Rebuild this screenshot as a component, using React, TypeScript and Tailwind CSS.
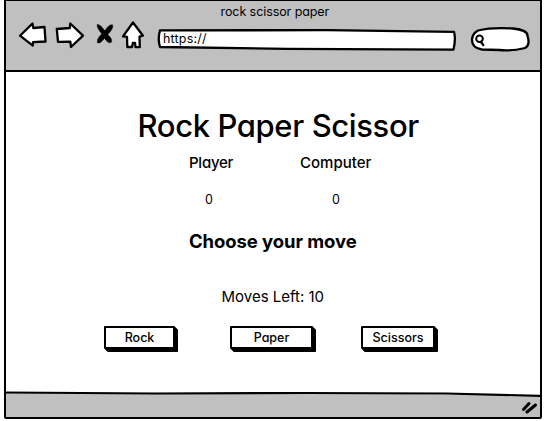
import React from 'react';

const ink = { stroke: '#000', strokeLinecap: 'round', strokeLinejoin: 'round' } as const;

function NavIcons() {
  return (
    <svg width="145" height="70" viewBox="0 0 145 70" className="block shrink-0" fill="#fff" strokeWidth="2.3" {...ink}>
      <path d="M14 34.7 L26.5 22.5 L27.3 27 L38.5 26 L39.5 40.5 L27 41.2 L26.8 44.7 Z" />
      <path d="M50.8 28 L63.8 27 L64.3 22.5 L77 34.7 L65 46 L64.3 40.7 L52 40.8 Z" />
      <path d="M117 35.3 L127 21.5 L137 34.7 L133.5 35.7 L133.8 46.2 L129.5 46 L129 42 L126.8 42 L126 46 L121.3 46 L121 35.9 Z" />
      <path d="M91.3 23.8 Q93.5 22.5 98.8 29.8 Q103 23 106.5 23.8 Q108 27 101.8 33.6 Q107 38.5 105.3 41.3 Q102.5 43.3 98.5 37.2 Q94.5 43 91.5 41.8 Q90.5 38 95.8 32.8 Q90.3 26.5 91.3 23.8 Z" fill="#000" strokeWidth="0.5" />
    </svg>
  );
}

function AddressBar() {
  return (
    <div className="relative ml-[6px] mt-[28px] h-[22px] w-[300px]">
      <svg className="absolute inset-0" width="300" height="22" fill="#fff" strokeWidth="2.3" {...ink}>
        <path d="M3 1.3 L170 1.2 L297 2.8 Q299 10 296.5 20.6 L130 19.9 L3 18 Q0.5 10 3 1.3 Z" />
      </svg>
      <span className="relative block pl-[6px] pt-[1px] text-[12.5px] font-normal leading-[18px] tracking-[0.2px]">https://</span>
    </div>
  );
}

function SearchField() {
  return (
    <svg className="ml-[13px] mt-[25px] block shrink-0" width="62" height="28" fill="#fff" strokeWidth="2.3" {...ink}>
      <path d="M8 4.5 Q22 1 43 2.5 Q58 4 57.5 10 Q60.5 19 55 22 Q42 25.5 29 24 L12 23.5 Q2 22 2 14 Q2 8 8 4.5 Z" />
      <circle cx="9.5" cy="12.8" r="3.3" strokeWidth="2" />
      <path d="M11 16 L13.3 19" />
    </svg>
  );
}

function MoveButton({ label, className }: { label: string; className: string }) {
  return (
    <button
      className={`h-[23px] rounded-[1px] border-2 border-black bg-white text-[12.5px] font-medium leading-[20px] shadow-[1px_1px_0_#000,2px_2px_0_#000,3px_3px_0_#000] ${className}`}
    >
      {label}
    </button>
  );
}

export default function App() {
  return (
    <div className="h-[421px] w-[548px] overflow-hidden bg-white pl-[4px] font-[Inter,'Noto_Sans',sans-serif] font-medium text-black [font-feature-settings:'cv11']">
      <main className="flex h-[419px] w-[538px] flex-col rounded-b-[2px] border-x-2 border-b-2 border-t border-black">
        <header className="relative flex h-[71px] shrink-0 border-b-2 border-black bg-[#c0c0c0]">
          <NavIcons />
          <AddressBar />
          <SearchField />
          <div className="absolute left-[214.5px] top-[3px] whitespace-nowrap text-[12.5px] font-normal leading-4 -tracking-[0.08px]">rock scissor paper</div>
        </header>

        <section className="flex grow flex-col">
          <h1 className="mt-[34px] whitespace-nowrap pl-[131.5px] text-[31px] font-medium leading-[40px] -tracking-[0.38px]">Rock Paper Scissor</h1>
          <div className="mt-[7px] flex pl-[150px] text-[15px] leading-[20px]">
            <div className="w-[111px] pl-[33px] -tracking-[0.25px]">Player</div>
            <div className="pl-[33px]">Computer</div>
          </div>
          <div className="mt-[17px] flex pl-[199px] text-[12.5px] font-normal leading-[20px]">
            <div className="w-[127px]">0</div>
            <div>0</div>
          </div>
          <h2 className="mt-[19px] pl-[183px] text-[18.5px] font-bold leading-[24px] -tracking-[0.08px]">Choose your move</h2>
          <p className="mt-[34px] pl-[215.5px] text-[15px] font-normal leading-[20px]">Moves Left: 10</p>
          <div className="mt-[19px] flex pl-[98px]">
            <MoveButton label="Rock" className="w-[71px]" />
            <MoveButton label="Paper" className="ml-[55px] w-[83px]" />
            <MoveButton label="Scissors" className="ml-[48px] w-[74px]" />
          </div>
        </section>

        <footer className="relative h-[24px] shrink-0 bg-[#c0c0c0]">
          <svg className="absolute left-0 top-[-3px]" width="534" height="27" strokeWidth="2.2" fill="none" {...ink}>
            <path d="M0 0 H534 V5.5 L360 3.5 L0 2.5 Z" fill="#fff" stroke="none" />
            <path d="M0 2.5 L150 3.5 L300 3 L440 3.5 L534 5.8" />
            <path d="M517.5 19.5 L523 13.5 M521 22 L529.5 15" strokeWidth="3" />
          </svg>
        </footer>
      </main>
    </div>
  );
}
